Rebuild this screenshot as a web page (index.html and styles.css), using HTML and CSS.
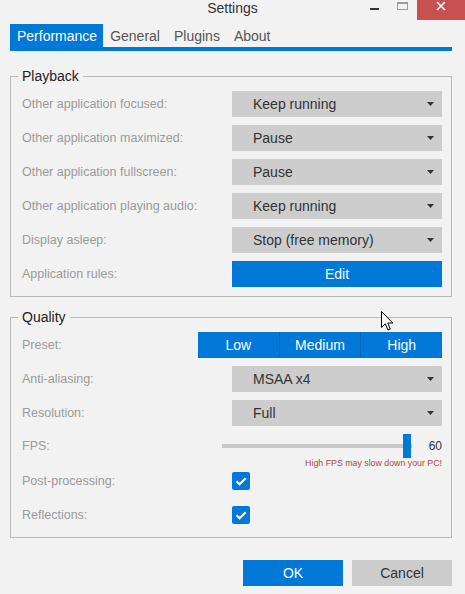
FILE: index.html
```html
<!DOCTYPE html>
<html>
<head>
<meta charset="utf-8">
<title>Settings</title>
<link rel="stylesheet" href="styles.css">
</head>
<body>
<div class="window">
  <div class="titlebar">
    <div></div>
    <div class="title">Settings</div>
    <div class="controls">
      <div class="ctl ctl-min"><span class="min-line"></span></div>
      <div class="ctl ctl-max"><span class="max-box"></span></div>
      <div class="ctl ctl-close">
        <svg width="10" height="10" viewBox="0 0 10 10"><path d="M1 1 L9 9 M9 1 L1 9" stroke="#fff" stroke-width="1.6"/></svg>
      </div>
    </div>
  </div>

  <div class="tabs">
    <div class="tab active">Performance</div>
    <div class="tab">General</div>
    <div class="tab">Plugins</div>
    <div class="tab">About</div>
  </div>

  <fieldset class="group group-playback">
    <legend>Playback</legend>
    <div class="row">
      <div class="label">Other application focused:</div>
      <div class="select"><span>Keep running</span><svg class="arrow" width="7" height="4" viewBox="0 0 7 4"><path d="M0 0 H7 L3.5 4 Z" fill="#333"/></svg></div>
    </div>
    <div class="row">
      <div class="label">Other application maximized:</div>
      <div class="select"><span>Pause</span><svg class="arrow" width="7" height="4" viewBox="0 0 7 4"><path d="M0 0 H7 L3.5 4 Z" fill="#333"/></svg></div>
    </div>
    <div class="row">
      <div class="label">Other application fullscreen:</div>
      <div class="select"><span>Pause</span><svg class="arrow" width="7" height="4" viewBox="0 0 7 4"><path d="M0 0 H7 L3.5 4 Z" fill="#333"/></svg></div>
    </div>
    <div class="row">
      <div class="label">Other application playing audio:</div>
      <div class="select"><span>Keep running</span><svg class="arrow" width="7" height="4" viewBox="0 0 7 4"><path d="M0 0 H7 L3.5 4 Z" fill="#333"/></svg></div>
    </div>
    <div class="row">
      <div class="label">Display asleep:</div>
      <div class="select"><span>Stop (free memory)</span><svg class="arrow" width="7" height="4" viewBox="0 0 7 4"><path d="M0 0 H7 L3.5 4 Z" fill="#333"/></svg></div>
    </div>
    <div class="row last">
      <div class="label">Application rules:</div>
      <div class="btn btn-blue btn-wide">Edit</div>
    </div>
  </fieldset>

  <fieldset class="group group-quality">
    <legend>Quality</legend>
    <div class="row">
      <div class="label">Preset:</div>
      <div class="segmented">
        <div class="seg">Low</div>
        <div class="seg">Medium</div>
        <div class="seg">High</div>
      </div>
    </div>
    <div class="row">
      <div class="label">Anti-aliasing:</div>
      <div class="select"><span>MSAA x4</span><svg class="arrow" width="7" height="4" viewBox="0 0 7 4"><path d="M0 0 H7 L3.5 4 Z" fill="#333"/></svg></div>
    </div>
    <div class="row">
      <div class="label">Resolution:</div>
      <div class="select"><span>Full</span><svg class="arrow" width="7" height="4" viewBox="0 0 7 4"><path d="M0 0 H7 L3.5 4 Z" fill="#333"/></svg></div>
    </div>
    <div class="row row-fps">
      <div class="label">FPS:</div>
      <div class="slider">
        <div class="track-wrap">
          <div class="track"></div>
          <div class="thumb"></div>
        </div>
        <div class="value">60</div>
      </div>
    </div>
    <div class="warning">High FPS may slow down your PC!</div>
    <div class="row row-check">
      <div class="label">Post-processing:</div>
      <div class="check-cell">
        <svg width="18" height="18" viewBox="0 0 18 18"><rect x="0" y="0" width="18" height="18" rx="2" fill="#0078d7"/><path d="M4.5 9.2 L7.6 12.2 L13.6 6.2" fill="none" stroke="#fff" stroke-width="2.2"/></svg>
      </div>
    </div>
    <div class="row row-check last">
      <div class="label">Reflections:</div>
      <div class="check-cell">
        <svg width="18" height="18" viewBox="0 0 18 18"><rect x="0" y="0" width="18" height="18" rx="2" fill="#0078d7"/><path d="M4.5 9.2 L7.6 12.2 L13.6 6.2" fill="none" stroke="#fff" stroke-width="2.2"/></svg>
      </div>
    </div>
  </fieldset>

  <div class="footer">
    <div class="btn btn-blue btn-footer">OK</div>
    <div class="btn btn-gray btn-footer">Cancel</div>
  </div>

  <svg class="cursor" width="13" height="20" viewBox="0 0 13 20"><path d="M0.5 0.5 L0.5 16.5 L4.3 12.8 L7 19 L9.3 18 L6.7 12 L11.8 12 Z" fill="#fff" stroke="#000" stroke-width="1" stroke-linejoin="miter"/></svg>
</div>
</body>
</html>
```

FILE: styles.css
```css
* { box-sizing: border-box; }

html, body {
  margin: 0;
  padding: 0;
  width: 465px;
  height: 594px;
  overflow: hidden;
  background: #f2f2f2;
  font-family: "Liberation Sans", Arial, sans-serif;
}

.window {
  position: relative;
  width: 465px;
  height: 594px;
  background: #f2f2f2;
}

.titlebar {
  display: grid;
  grid-template-columns: 1fr auto 1fr;
  height: 24px;
}

.title {
  font-size: 14px;
  line-height: 16px;
  color: #333;
}

.controls {
  justify-self: end;
  display: flex;
  align-items: flex-start;
}

.ctl {
  height: 20px;
  display: flex;
  justify-content: center;
}

.ctl-min { width: 28px; }
.ctl-max { width: 29px; }
.ctl-close {
  width: 48px;
  background: #c75050;
  align-items: flex-start;
  padding-top: 1px;
}

.min-line {
  margin-top: 8px;
  width: 9px;
  height: 2px;
  background: #333;
}

.max-box {
  margin-top: 2px;
  width: 11px;
  height: 8px;
  border: 1px solid #9a9a9a;
  border-top-width: 2px;
}

.tabs {
  display: flex;
  margin: 0 0 0 10px;
  width: 442px;
  border-bottom: 4px solid #0078d7;
}

.tab {
  height: 23px;
  line-height: 22px;
  padding: 1px 7px 0;
  font-size: 14px;
  color: #555;
}

.tab.active {
  background: #0078d7;
  color: #fff;
  padding: 1px 6px 0 7px;
}

.group {
  margin: 17px 0 0 10px;
  width: 442px;
  min-width: 0;
  border: 1px solid #b9b9b9;
  padding: 7px 9px 9px 11px;
}

.group-quality {
  margin-top: 12px;
}

legend {
  font-size: 14px;
  line-height: 16px;
  color: #222;
  padding: 0 4px;
  margin-left: -4px;
}

.row {
  display: flex;
  align-items: center;
  height: 26px;
  margin-bottom: 8px;
}

.row.last { margin-bottom: 0; }

.label {
  flex: 1;
  font-size: 12.5px;
  color: #9a9a9a;
}

.select {
  width: 210px;
  height: 26px;
  background: #cdcdcd;
  display: flex;
  align-items: center;
  justify-content: space-between;
  padding: 0 8px 0 21px;
  font-size: 14px;
  color: #333;
}

.arrow { display: block; }

.btn {
  display: flex;
  align-items: center;
  justify-content: center;
  height: 26px;
  font-size: 14px;
}

.btn-blue {
  background: #0078d7;
  color: #fff;
}

.btn-gray {
  background: #cccccc;
  color: #333;
}

.btn-wide { width: 210px; }

.segmented {
  width: 244px;
  height: 26px;
  display: flex;
  background: #0078d7;
}

.seg {
  flex: 1;
  display: flex;
  align-items: center;
  justify-content: center;
  color: #fff;
  font-size: 14px;
}

.seg + .seg {
  border-left: 1px solid #0a66b4;
}

.row-fps {
  height: 24px;
  margin-bottom: 0;
}

.slider {
  width: 220px;
  height: 24px;
  display: flex;
  align-items: center;
}

.track-wrap {
  position: relative;
  width: 190px;
  height: 24px;
  display: flex;
  align-items: center;
}

.track {
  width: 100%;
  height: 4px;
  background: #c8c8c8;
}

.thumb {
  position: absolute;
  left: 181px;
  top: 0;
  width: 8px;
  height: 24px;
  background: #0078d7;
}

.value {
  flex: 1;
  text-align: right;
  font-size: 12px;
  color: #333;
}

.warning {
  height: 10px;
  line-height: 10px;
  font-size: 8.8px;
  text-align: right;
  color: #b0473a;
}

.check-cell {
  width: 210px;
  display: flex;
  align-items: center;
}

.check-cell svg { display: block; }

.footer {
  display: flex;
  justify-content: flex-end;
  gap: 9px;
  margin-top: 22px;
  padding-right: 13px;
}

.btn-footer { width: 100px; }

.cursor {
  position: absolute;
  left: 381px;
  top: 311px;
}
```
